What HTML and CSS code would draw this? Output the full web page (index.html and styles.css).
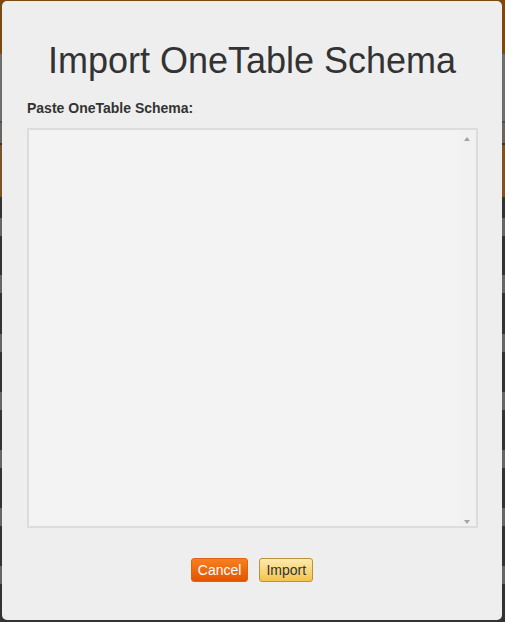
FILE: index.html
```html
<!DOCTYPE html>
<html lang="en">
<head>
<meta charset="utf-8">
<title>Import OneTable Schema</title>
<link rel="stylesheet" href="styles.css">
</head>
<body>
<div class="backdrop">
  <div class="dialog">
    <h1 class="title">Import OneTable Schema</h1>
    <label class="field-label" for="schema">Paste OneTable Schema:</label>
    <div class="input-wrap">
      <textarea id="schema" class="schema-input"></textarea>
      <div class="scrollbar" aria-hidden="true">
        <span class="arrow arrow-up"></span>
        <span class="arrow arrow-down"></span>
      </div>
    </div>
    <div class="actions">
      <button class="btn btn-cancel" type="button">Cancel</button>
      <button class="btn btn-import" type="button">Import</button>
    </div>
  </div>
</div>
</body>
</html>
```
FILE: styles.css
```css
html, body {
  margin: 0;
  padding: 0;
  height: 100%;
}
body {
  font-family: "Liberation Sans", Arial, sans-serif;
  background:
    linear-gradient(to bottom,
      #7b4a12 0, #7b4a12 54px,
      #6e6e6e 54px, #6e6e6e 121px,
      #2f5a6e 121px, #2f5a6e 123px,
      #6a6560 123px, #6a6560 143px,
      #333 143px, #333 145px,
      #7a5428 145px, #7a5428 197px,
      #333 197px, #333 218px,
      #666 218px, #666 236px,
      #333 236px, #333 275px,
      #666 275px, #666 293px,
      #333 293px, #333 334px,
      #666 334px, #666 352px,
      #333 352px, #333 392px,
      #666 392px, #666 410px,
      #333 410px, #333 450px,
      #666 450px, #666 468px,
      #333 468px, #333 508px,
      #666 508px, #666 526px,
      #333 526px, #333 566px,
      #666 566px, #666 584px,
      #333 584px);
  overflow: hidden;
}
.backdrop {
  padding: 1px 3px 0 2px;
}
.dialog {
  box-sizing: border-box;
  width: 500px;
  height: 619px;
  background: #eeeeee;
  border-radius: 5px;
  padding: 40px 25px 0 25px;
  display: flex;
  flex-direction: column;
  align-items: stretch;
}
.title {
  margin: 0;
  font-weight: normal;
  font-size: 36px;
  line-height: 40px;
  color: #333333;
  text-align: center;
}
.field-label {
  display: block;
  margin-top: 19px;
  font-size: 14px;
  line-height: 16px;
  font-weight: bold;
  color: #333333;
}
.input-wrap {
  position: relative;
  margin-top: 12px;
  width: 451px;
  height: 400px;
}
.schema-input {
  display: block;
  box-sizing: border-box;
  margin: 0;
  width: 451px;
  height: 400px;
  border: 2px solid #dcdcdc;
  background: #f3f3f3;
  resize: none;
  overflow: hidden;
  padding: 2px 19px 2px 2px;
  font-family: "Liberation Mono", monospace;
  font-size: 13px;
  outline: none;
}
.scrollbar {
  position: absolute;
  top: 2px;
  right: 2px;
  bottom: 2px;
  width: 17px;
  background: #f1f1f1;
}
.arrow {
  position: absolute;
  left: 5px;
  width: 0;
  height: 0;
  border-left: 3.5px solid transparent;
  border-right: 3.5px solid transparent;
}
.arrow-up {
  top: 7px;
  border-bottom: 4px solid #a3a3a3;
}
.arrow-down {
  bottom: 2px;
  border-top: 4px solid #a3a3a3;
}
.actions {
  display: flex;
  justify-content: center;
  gap: 11px;
  margin-top: 30px;
}
.btn {
  box-sizing: border-box;
  height: 24px;
  padding: 0 6px;
  border-radius: 3px;
  font-family: "Liberation Sans", Arial, sans-serif;
  font-size: 14px;
  line-height: 22px;
  cursor: pointer;
}
.btn-cancel {
  color: #ffffff;
  border: 1px solid #dc6414;
  background: linear-gradient(to bottom, #f6801f, #e35500);
}
.btn-import {
  color: #333333;
  border: 1px solid #b8923c;
  background: linear-gradient(to bottom, #fdeaac, #f2c44e);
}
```
